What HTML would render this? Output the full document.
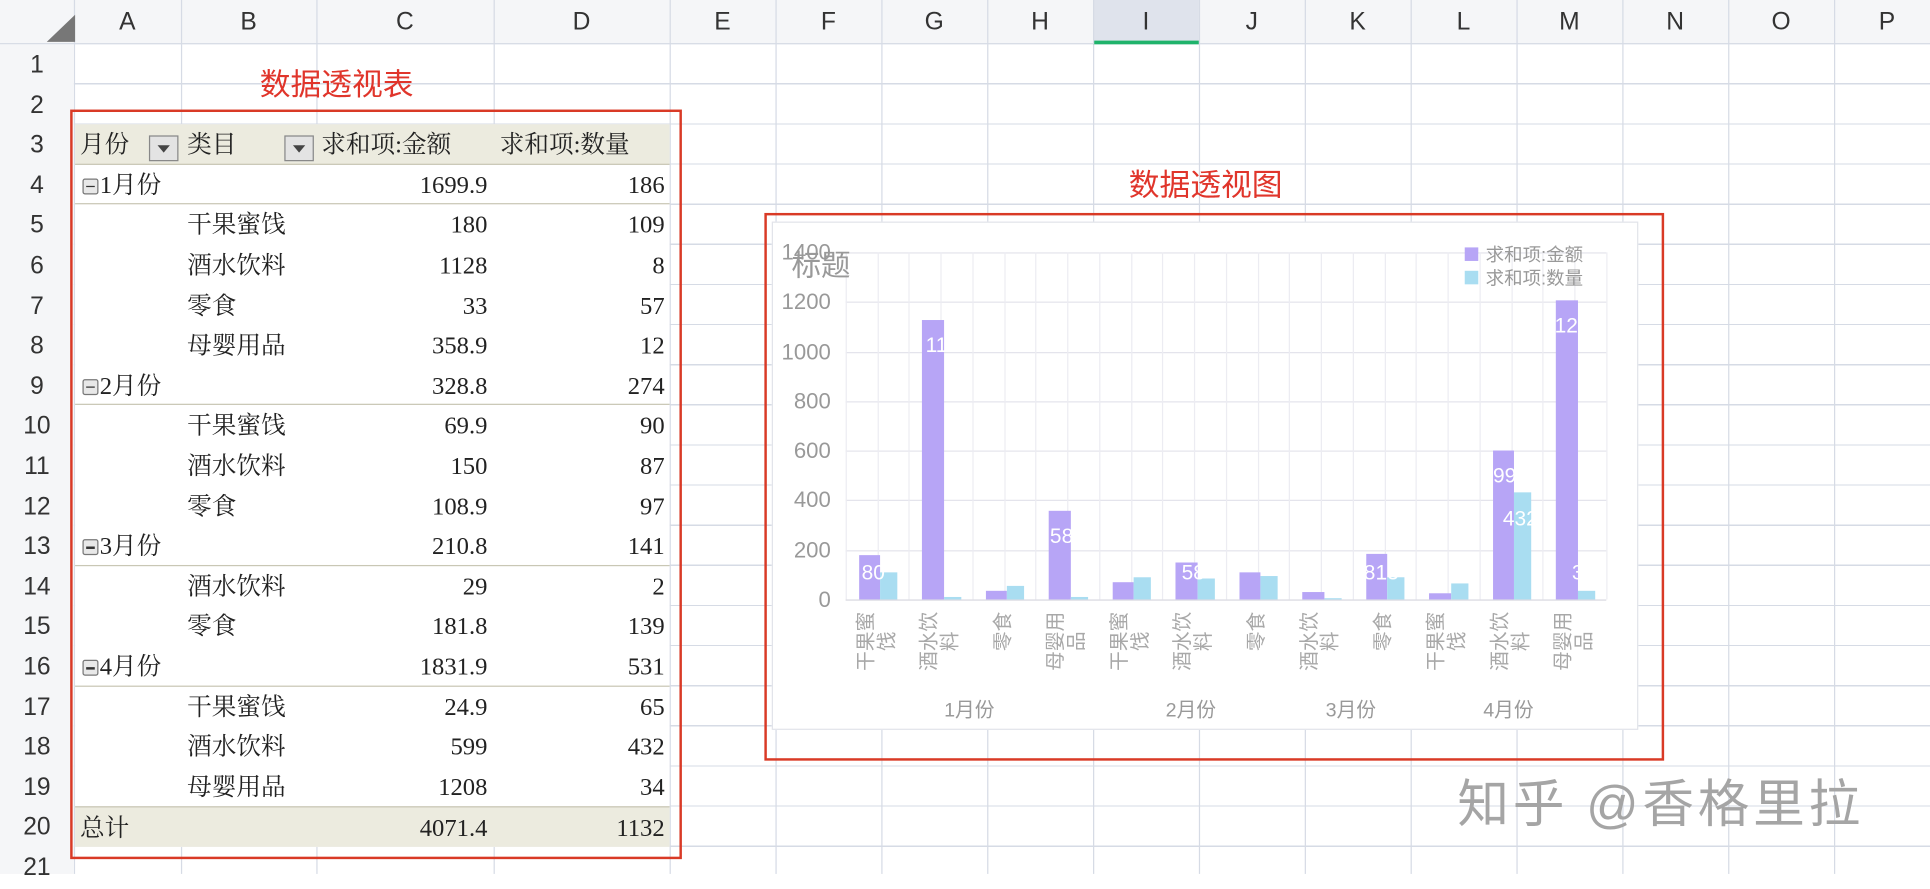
<!DOCTYPE html>
<html><head><meta charset="utf-8"><style>
*{margin:0;padding:0;box-sizing:border-box}
html,body{width:1930px;height:874px;overflow:hidden;background:#fff}
#w{position:absolute;left:0;top:0;width:1568px;height:710px;transform:scale(1.23087);transform-origin:0 0;font-family:"Liberation Sans","Noto Sans CJK SC",sans-serif}
.a{position:absolute}
.vl{position:absolute;top:0;width:1px;height:710px;background:#d6dbe5}
.hd{position:absolute;top:0;height:36px;line-height:36px;text-align:center;font-size:20px;color:#333}
.rn{position:absolute;left:0;width:60px;text-align:center;font-size:20px;color:#333;height:32.6px;line-height:34px}
.tr{position:absolute;left:61px;width:483px;height:32.6px;line-height:34px;font-family:"Liberation Serif","Noto Serif CJK SC",serif;font-size:20px;color:#222}
.tr span{position:absolute}
.c{right:148px;text-align:right}
.d{right:4px;text-align:right}
.n{left:91px}
.yl{position:absolute;width:60px;left:615px;text-align:right;font-size:18px;color:#999;line-height:20px}
.gh{position:absolute;left:687px;width:618px;height:1px;background:#e4e4ec}
.gv{position:absolute;top:205px;height:282px;width:1px;background:#ececf2}
.p{position:absolute;background:#b7a5f6;width:17.5px}
.b{position:absolute;background:#a9ddf1;width:14px}
.cl{position:absolute;top:496px;width:50px;text-align:center;font-size:16px;line-height:17px;color:#a8a8a8;transform-origin:0 0;transform:translate(0,50px) rotate(-90deg);white-space:normal;word-break:break-all}
.cl.s{width:34px;transform:translate(0,34px) rotate(-90deg)}
.ml{position:absolute;top:563px;font-size:16px;color:#999}
.mk{display:inline-block;width:13px;height:13px;border:1px solid #777;border-radius:2px;background:#e8e8e8;position:relative;top:1px;margin-right:1px}
.mk:after{content:"";position:absolute;left:2px;top:5px;width:7px;height:1.5px;background:#333}
.dd{position:absolute;top:9px;width:24px;height:21px;border:1px solid #888;background:#e3e3e3}
.dd:after{content:"";position:absolute;left:6px;top:7px;border-left:5px solid transparent;border-right:5px solid transparent;border-top:6px solid #444}
.dl{position:absolute;color:#fff;font-size:17px}
</style></head><body><div id="w">
<div class="a" style="left:0;top:36px;width:1568px;height:674px;background:repeating-linear-gradient(to bottom,transparent 0,transparent 31.6px,#d6dbe5 31.6px,#d6dbe5 32.6px)"></div>
<div class="vl" style="left:60px"></div><div class="vl" style="left:147px"></div><div class="vl" style="left:257px"></div><div class="vl" style="left:401px"></div><div class="vl" style="left:544px"></div><div class="vl" style="left:630px"></div><div class="vl" style="left:716px"></div><div class="vl" style="left:802px"></div><div class="vl" style="left:888px"></div><div class="vl" style="left:974px"></div><div class="vl" style="left:1060px"></div><div class="vl" style="left:1146px"></div><div class="vl" style="left:1232px"></div><div class="vl" style="left:1318px"></div><div class="vl" style="left:1404px"></div><div class="vl" style="left:1490px"></div>
<div class="a" style="left:0;top:0;width:1568px;height:36px;background:#f5f6f8;border-bottom:1px solid #d6dbe5"></div>
<div class="a" style="left:0;top:36px;width:60px;height:674px;background:#f5f6f8"></div>
<div class="a" style="left:888px;top:0;width:86px;height:36px;background:#dfe3ec;border-bottom:3px solid #1fb36b"></div>
<div class="vl" style="left:60px;height:36px"></div><div class="vl" style="left:147px;height:36px"></div><div class="vl" style="left:257px;height:36px"></div><div class="vl" style="left:401px;height:36px"></div><div class="vl" style="left:544px;height:36px"></div><div class="vl" style="left:630px;height:36px"></div><div class="vl" style="left:716px;height:36px"></div><div class="vl" style="left:802px;height:36px"></div><div class="vl" style="left:888px;height:36px"></div><div class="vl" style="left:974px;height:36px"></div><div class="vl" style="left:1060px;height:36px"></div><div class="vl" style="left:1146px;height:36px"></div><div class="vl" style="left:1232px;height:36px"></div><div class="vl" style="left:1318px;height:36px"></div><div class="vl" style="left:1404px;height:36px"></div><div class="vl" style="left:1490px;height:36px"></div>
<div class="a" style="left:42px;top:12px;width:0;height:0;border-left:23px solid transparent;border-bottom:22px solid #777;transform:translateX(-4px)"></div>
<div class="hd" style="left:60px;width:87px">A</div><div class="hd" style="left:147px;width:110px">B</div><div class="hd" style="left:257px;width:144px">C</div><div class="hd" style="left:401px;width:143px">D</div><div class="hd" style="left:544px;width:86px">E</div><div class="hd" style="left:630px;width:86px">F</div><div class="hd" style="left:716px;width:86px">G</div><div class="hd" style="left:802px;width:86px">H</div><div class="hd" style="left:888px;width:86px">I</div><div class="hd" style="left:974px;width:86px">J</div><div class="hd" style="left:1060px;width:86px">K</div><div class="hd" style="left:1146px;width:86px">L</div><div class="hd" style="left:1232px;width:86px">M</div><div class="hd" style="left:1318px;width:86px">N</div><div class="hd" style="left:1404px;width:86px">O</div><div class="hd" style="left:1490px;width:86px">P</div>
<div class="rn" style="top:36px">1</div><div class="rn" style="top:68.6px">2</div><div class="rn" style="top:101.2px">3</div><div class="rn" style="top:133.8px">4</div><div class="rn" style="top:166.4px">5</div><div class="rn" style="top:199px">6</div><div class="rn" style="top:231.6px">7</div><div class="rn" style="top:264.2px">8</div><div class="rn" style="top:296.8px">9</div><div class="rn" style="top:329.4px">10</div><div class="rn" style="top:362px">11</div><div class="rn" style="top:394.6px">12</div><div class="rn" style="top:427.2px">13</div><div class="rn" style="top:459.8px">14</div><div class="rn" style="top:492.4px">15</div><div class="rn" style="top:525px">16</div><div class="rn" style="top:557.6px">17</div><div class="rn" style="top:590.2px">18</div><div class="rn" style="top:622.8px">19</div><div class="rn" style="top:655.4px">20</div><div class="rn" style="top:688px">21</div>
<div class="a" style="left:211px;top:49px;font-size:25px;color:#e0352b">数据透视表</div>
<div class="a" style="left:61px;top:101px;width:483px;height:587px;background:#fff"></div>
<div class="tr" style="top:101.2px;background:#ecebdf;border-bottom:1px solid #c9c7b5"><span style="left:4px">月份</span><div class="dd" style="left:60px"></div><span style="left:91px">类目</span><div class="dd" style="left:170px"></div><span style="left:200px">求和项:金额</span><span style="left:345px">求和项:数量</span></div>
<div class="tr" style="top:133.8px;border-bottom:1px solid #c9c7b5"><span style="left:6px"><i class="mk"></i>1月份</span><span class="c">1699.9</span><span class="d">186</span></div>
<div class="tr" style="top:166.4px"><span class="n">干果蜜饯</span><span class="c">180</span><span class="d">109</span></div>
<div class="tr" style="top:199px"><span class="n">酒水饮料</span><span class="c">1128</span><span class="d">8</span></div>
<div class="tr" style="top:231.6px"><span class="n">零食</span><span class="c">33</span><span class="d">57</span></div>
<div class="tr" style="top:264.2px"><span class="n">母婴用品</span><span class="c">358.9</span><span class="d">12</span></div>
<div class="tr" style="top:296.8px;border-bottom:1px solid #c9c7b5"><span style="left:6px"><i class="mk"></i>2月份</span><span class="c">328.8</span><span class="d">274</span></div>
<div class="tr" style="top:329.4px"><span class="n">干果蜜饯</span><span class="c">69.9</span><span class="d">90</span></div>
<div class="tr" style="top:362px"><span class="n">酒水饮料</span><span class="c">150</span><span class="d">87</span></div>
<div class="tr" style="top:394.6px"><span class="n">零食</span><span class="c">108.9</span><span class="d">97</span></div>
<div class="tr" style="top:427.2px;border-bottom:1px solid #c9c7b5"><span style="left:6px"><i class="mk"></i>3月份</span><span class="c">210.8</span><span class="d">141</span></div>
<div class="tr" style="top:459.8px"><span class="n">酒水饮料</span><span class="c">29</span><span class="d">2</span></div>
<div class="tr" style="top:492.4px"><span class="n">零食</span><span class="c">181.8</span><span class="d">139</span></div>
<div class="tr" style="top:525px;border-bottom:1px solid #c9c7b5"><span style="left:6px"><i class="mk"></i>4月份</span><span class="c">1831.9</span><span class="d">531</span></div>
<div class="tr" style="top:557.6px"><span class="n">干果蜜饯</span><span class="c">24.9</span><span class="d">65</span></div>
<div class="tr" style="top:590.2px"><span class="n">酒水饮料</span><span class="c">599</span><span class="d">432</span></div>
<div class="tr" style="top:622.8px"><span class="n">母婴用品</span><span class="c">1208</span><span class="d">34</span></div>
<div class="tr" style="top:655.4px;background:#ecebdf;border-top:1px solid #c9c7b5"><span style="left:4px">总计</span><span class="c">4071.4</span><span class="d">1132</span></div>
<div class="a" style="left:57px;top:89px;width:497px;height:609px;border:2px solid #d93a26"></div>
<div class="a" style="left:917px;top:131px;font-size:25px;color:#e0352b">数据透视图</div>
<div class="a" style="left:627px;top:180px;width:704px;height:413px;background:#fff;border:1px solid #e2e4ea"></div>
<div class="gh" style="top:205px"></div><div class="gh" style="top:245px"></div><div class="gh" style="top:286px"></div><div class="gh" style="top:326px"></div><div class="gh" style="top:366px"></div><div class="gh" style="top:406px"></div><div class="gh" style="top:447px"></div><div class="gh" style="top:487px;background:#d8d8e0"></div>
<div class="gv" style="left:687px"></div><div class="gv" style="left:713px"></div><div class="gv" style="left:738px"></div><div class="gv" style="left:764px"></div><div class="gv" style="left:790px"></div><div class="gv" style="left:816px"></div><div class="gv" style="left:841px"></div><div class="gv" style="left:867px"></div><div class="gv" style="left:893px"></div><div class="gv" style="left:919px"></div><div class="gv" style="left:944px"></div><div class="gv" style="left:970px"></div><div class="gv" style="left:996px"></div><div class="gv" style="left:1022px"></div><div class="gv" style="left:1047px"></div><div class="gv" style="left:1073px"></div><div class="gv" style="left:1099px"></div><div class="gv" style="left:1125px"></div><div class="gv" style="left:1150px"></div><div class="gv" style="left:1176px"></div><div class="gv" style="left:1202px"></div><div class="gv" style="left:1228px"></div><div class="gv" style="left:1253px"></div><div class="gv" style="left:1279px"></div><div class="gv" style="left:1305px"></div>
<div class="yl" style="top:195px">1400</div><div class="yl" style="top:235px">1200</div><div class="yl" style="top:276px">1000</div><div class="yl" style="top:316px">800</div><div class="yl" style="top:356px">600</div><div class="yl" style="top:396px">400</div><div class="yl" style="top:437px">200</div><div class="yl" style="top:477px">0</div>
<div class="a" style="left:643px;top:196px;font-size:24px;color:#999">标题</div>
<div class="p" style="left:697.7px;top:450.7px;height:36.3px"></div><div class="b" style="left:715.2px;top:465px;height:22px"></div>
<div class="p" style="left:749.2px;top:259.7px;height:227.3px"></div><div class="b" style="left:766.7px;top:485px;height:2px"></div>
<div class="p" style="left:800.7px;top:480.4px;height:6.6px"></div><div class="b" style="left:818.2px;top:475.5px;height:11.5px"></div>
<div class="p" style="left:852.2px;top:414.7px;height:72.3px"></div><div class="b" style="left:869.7px;top:484.6px;height:2.4px"></div>
<div class="p" style="left:903.7px;top:472.9px;height:14.1px"></div><div class="b" style="left:921.2px;top:468.9px;height:18.1px"></div>
<div class="p" style="left:955.2px;top:456.8px;height:30.2px"></div><div class="b" style="left:972.7px;top:469.5px;height:17.5px"></div>
<div class="p" style="left:1006.7px;top:465.1px;height:21.9px"></div><div class="b" style="left:1024.2px;top:467.5px;height:19.5px"></div>
<div class="p" style="left:1058.2px;top:481.2px;height:5.8px"></div><div class="b" style="left:1075.7px;top:485.5px;height:1.5px"></div>
<div class="p" style="left:1109.7px;top:450.4px;height:36.6px"></div><div class="b" style="left:1127.2px;top:469px;height:18px"></div>
<div class="p" style="left:1161.2px;top:482px;height:5px"></div><div class="b" style="left:1178.7px;top:473.9px;height:13.1px"></div>
<div class="p" style="left:1212.7px;top:366.3px;height:120.7px"></div><div class="b" style="left:1230.2px;top:400px;height:87px"></div>
<div class="p" style="left:1264.2px;top:243.6px;height:243.4px"></div><div class="b" style="left:1281.7px;top:480.1px;height:6.9px"></div>
<div class="dl" style="left:700px;top:456px">80</div><div class="dl" style="left:752px;top:271px">112</div><div class="dl" style="left:853px;top:426px">58</div><div class="dl" style="left:960px;top:456px">58</div><div class="dl" style="left:1108px;top:456px">813</div><div class="dl" style="left:1213px;top:377px">99</div><div class="dl" style="left:1221px;top:412px">432</div><div class="dl" style="left:1263px;top:255px">120</div><div class="dl" style="left:1277px;top:456px">3</div>
<div class="cl" style="left:696px">干果蜜饯</div><div class="cl" style="left:747px">酒水饮料</div><div class="cl s" style="left:807px">零食</div><div class="cl" style="left:850px">母婴用品</div><div class="cl" style="left:902px">干果蜜饯</div><div class="cl" style="left:953px">酒水饮料</div><div class="cl s" style="left:1013px">零食</div><div class="cl" style="left:1056px">酒水饮料</div><div class="cl s" style="left:1116px">零食</div><div class="cl" style="left:1159px">干果蜜饯</div><div class="cl" style="left:1211px">酒水饮料</div><div class="cl" style="left:1262px">母婴用品</div>
<div class="ml" style="left:767px">1月份</div><div class="ml" style="left:947px">2月份</div><div class="ml" style="left:1077px">3月份</div><div class="ml" style="left:1205px">4月份</div>
<div class="a" style="left:1190px;top:201px;width:11px;height:11px;background:#b7a5f6"></div><div class="a" style="left:1207px;top:196px;font-size:15px;color:#999">求和项:金额</div>
<div class="a" style="left:1190px;top:220px;width:11px;height:11px;background:#a9ddf1"></div><div class="a" style="left:1207px;top:215px;font-size:15px;color:#999">求和项:数量</div>
<div class="a" style="left:621px;top:173px;width:731px;height:445px;border:2px solid #d93a26"></div>
<div class="a" style="left:1184px;top:620px;font-size:42px;color:#a5a5a5;letter-spacing:3px;white-space:nowrap">知乎 @香格里拉</div>
</div></body></html>
